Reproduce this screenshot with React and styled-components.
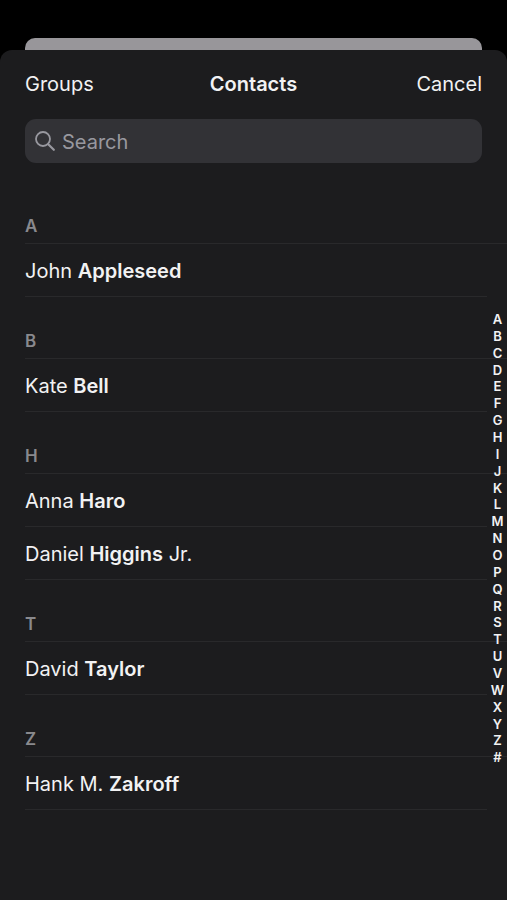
import React, { useState } from 'react'
import styled, { createGlobalStyle } from 'styled-components';

const sections = [
  { letter: 'A', people: [{ id: 1, first: 'John', last: 'Appleseed' }] },
  { letter: 'B', people: [{ id: 2, first: 'Kate', last: 'Bell' }] },
  {
    letter: 'H',
    people: [
      { id: 3, first: 'Anna', last: 'Haro' },
      { id: 4, first: 'Daniel', last: 'Higgins', suffix: 'Jr.' },
    ],
  },
  { letter: 'T', people: [{ id: 5, first: 'David', last: 'Taylor' }] },
  { letter: 'Z', people: [{ id: 6, first: 'Hank M.', last: 'Zakroff' }] },
];
const letters = 'ABCDEFGHIJKLMNOPQRSTUVWXYZ#'.split('');

const GlobalStyle = createGlobalStyle`
  * {
    box-sizing: border-box;
  }
  body {
    margin: 0;
    background: #000;
    color: #f2f2f3;
    font-family: Inter, "Liberation Sans", sans-serif;
    font-size: 20px;
  }
`;
const Screen = styled.div`
  display: flex;
  flex-direction: column;
  min-height: 100vh;
  padding-top: 38px;
`;
// The page behind the sheet, only its top edge is visible
const BackCard = styled.div`
  height: 12px;
  margin: 0 25px;
  background: #98969a;
  border-radius: 10px 10px 0 0;
`;
const Sheet = styled.main`
  display: flex;
  flex: 1;
  flex-direction: column;
  background: #1c1c1e;
  border-radius: 12px 12px 0 0;
`;
const Toolbar = styled.header`
  display: grid;
  grid-template-columns: 1fr auto 1fr;
  align-items: center;
  height: 67px;
  padding: 0 25px;
`;
const Title = styled.h1`
  margin: 0;
  font-size: 20px;
  font-weight: 600;
`;
const BarButton = styled.button`
  justify-self: ${({ $end }) => ($end ? 'end' : 'start')};
  padding: 0;
  border: 0;
  background: none;
  color: inherit;
  font: inherit;
  cursor: pointer;
`;
const SearchField = styled.label`
  display: flex;
  align-items: center;
  gap: 7px;
  height: 44px;
  margin: 2px 25px 19px;
  padding: 0 10px;
  background: #323236;
  border-radius: 11px;
  color: #98989f;
`;
const SearchInput = styled.input`
  flex: 1;
  min-width: 0;
  padding: 2px 0 0;
  border: 0;
  outline: 0;
  background: none;
  color: #f2f2f3;
  font: inherit;
  &::placeholder {
    color: #98989f;
    opacity: 1;
  }
`;
const ListArea = styled.div`
  position: relative;
  flex: 1;
  padding-bottom: 4px;
`;
const SectionTitle = styled.h2`
  display: flex;
  align-items: flex-end;
  height: 62px;
  margin: 0 0 0 25px;
  padding-bottom: 7px;
  border-bottom: 1px solid #29292b;
  color: #89898d;
  font-size: 17px;
  font-weight: 600;
  line-height: 20px;
`;
const People = styled.ul`
  margin: 0 20px 0 25px;
  padding: 0;
  list-style: none;
`;
const Person = styled.li`
  height: 53px;
  border-bottom: 1px solid #29292b;
  line-height: 54px;
`;
const LastName = styled.strong`
  font-weight: 600;
`;
const IndexBar = styled.nav`
  position: absolute;
  top: 0;
  right: 0;
  bottom: 6px;
  display: flex;
  align-items: center;
`;
const IndexLetters = styled.div`
  display: flex;
  flex-direction: column;
  width: 19px;
  height: 455px;
`;
const IndexLink = styled.a`
  display: flex;
  flex: 1;
  align-items: center;
  justify-content: center;
  color: #f2f2f3;
  font-size: 13px;
  font-weight: 600;
  line-height: 16px;
  text-decoration: none;
`;

const SearchIcon = () => (
  <svg width="20" height="20" viewBox="0 0 20 20" fill="none" stroke="currentColor" strokeLinecap="round" aria-hidden="true">
    <circle cx="8" cy="8" r="7" strokeWidth="1.8" />
    <path d="M13.2 13.2L18.8 18.8" strokeWidth="2.2" />
  </svg>
);

const Section = ({ letter, people }) => (
  <section id={`section-${letter}`}>
    <SectionTitle>{letter}</SectionTitle>
    <People>
      {people.map(({ id, first, last, suffix }) => (
        <Person key={id}>
          {first} <LastName>{last}</LastName>
          {suffix && ` ${suffix}`}
        </Person>
      ))}
    </People>
  </section>
);

const App = () => {
  const [query, setQuery] = useState('');

  const visible = sections
    .map((section) => ({
      ...section,
      people: section.people.filter(({ first, last }) =>
        `${first} ${last}`.toLowerCase().includes(query.toLowerCase())
      ),
    }))
    .filter((section) => section.people.length > 0);

  return (
    <Screen>
      <GlobalStyle />
      <BackCard />
      <Sheet>
        <Toolbar>
          <BarButton type="button">Groups</BarButton>
          <Title>Contacts</Title>
          <BarButton type="button" $end>Cancel</BarButton>
        </Toolbar>
        <SearchField>
          <SearchIcon />
          <SearchInput
            type="text"
            placeholder="Search"
            aria-label="Search"
            value={query}
            onChange={(e) => setQuery(e.target.value)}
          />
        </SearchField>
        <ListArea>
          {visible.map((section) => (
            <Section key={section.letter} {...section} />
          ))}
          <IndexBar aria-label="Index">
            <IndexLetters>
              {letters.map((letter) => (
                <IndexLink key={letter} href={`#section-${letter}`}>{letter}</IndexLink>
              ))}
            </IndexLetters>
          </IndexBar>
        </ListArea>
      </Sheet>
    </Screen>
  );
};
export default App;
